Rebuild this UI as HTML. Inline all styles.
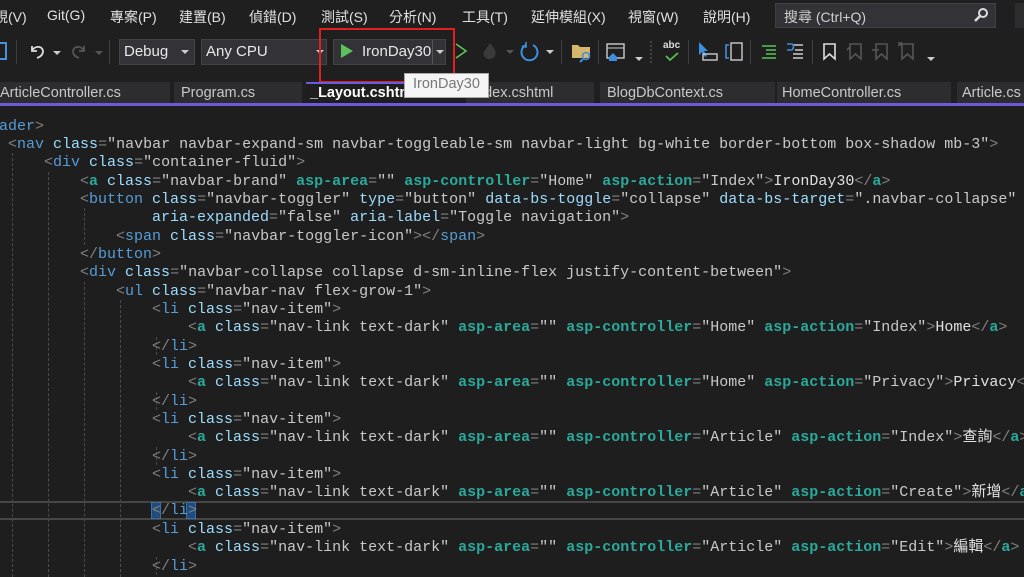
<!DOCTYPE html>
<html><head><meta charset="utf-8">
<style>
*{margin:0;padding:0;box-sizing:border-box}
html,body{width:1024px;height:577px;overflow:hidden}
body{background:#1e1e1e;position:relative;font-family:"Liberation Sans","Noto Sans CJK TC",sans-serif}
.abs{position:absolute}
#clip{position:absolute;left:0;top:0;width:1024px;height:577px;overflow:hidden}
#menu{left:0;top:0;width:1024px;height:32px;background:#1f1f1f}
.m{position:absolute;top:7px;color:#e0e0e0;font-size:14px;white-space:nowrap}
#search{left:775px;top:3px;width:221px;height:25px;background:#333337;border:1px solid #3f3f46;color:#d0d0d0;font-size:14px;padding:3px 8px}
#tb{left:0;top:32px;width:1024px;height:50px;background:#1f1f1f}
.dd{position:absolute;top:39px;height:26px;background:#333337;border:1px solid #434346;color:#e8e8e8;font-size:15px;padding:3px 4px}
.caret{position:absolute;width:0;height:0;border-left:4px solid transparent;border-right:4px solid transparent;border-top:4px solid #ccc}
.sep{position:absolute;top:40px;width:1px;height:24px;background:#3f3f46}
#tabs{left:0;top:82px;width:1024px;height:22px;background:#1f1f1f}
.tab{position:absolute;top:82px;height:22px;background:#2d2d30;color:#c8c8c8;font-size:14.5px;padding:3px 0 0 0;white-space:nowrap;overflow:hidden}
#purple{left:0;top:103px;width:1024px;height:3px;background:#6b5bd8}
.ln{position:absolute;font-family:"Liberation Mono","Noto Sans CJK TC",monospace;font-size:15px;line-height:18px;white-space:pre;color:#dcdcdc}
.d{color:#808080}.t{color:#569cd6}.a{color:#9cdcfe}.s{color:#c8c8c8}.p{color:#2aa99b;font-weight:bold}.x{color:#e0e0e0}
.g{position:absolute;width:0;border-left:1px dashed #4a4a4a}
</style></head><body><div id="clip">
<div id="menu" class="abs"></div>
<span class="m" style="left:-6px">視(V)</span>
<span class="m" style="left:47px">Git(G)</span>
<span class="m" style="left:110px">專案(P)</span>
<span class="m" style="left:179px">建置(B)</span>
<span class="m" style="left:249px">偵錯(D)</span>
<span class="m" style="left:321px">測試(S)</span>
<span class="m" style="left:389px">分析(N)</span>
<span class="m" style="left:462px">工具(T)</span>
<span class="m" style="left:531px">延伸模組(X)</span>
<span class="m" style="left:628px">視窗(W)</span>
<span class="m" style="left:703px">說明(H)</span>
<div id="search" class="abs">搜尋 (Ctrl+Q)</div>
<svg class="abs" style="left:973px;top:7px" width="16" height="16"><circle cx="10" cy="6" r="4" fill="none" stroke="#ddd" stroke-width="2"/><line x1="7" y1="9" x2="2" y2="14" stroke="#ddd" stroke-width="2.5"/></svg>
<div class="abs" style="left:1015px;top:3px;width:9px;height:25px;background:#2d2d30"></div>

<div id="tb" class="abs"></div>
<div class="abs" style="left:0;top:42px;width:7px;height:18px;border:2px solid #4a90d9;border-left:none"></div>
<div class="sep" style="left:16px"></div>
<svg class="abs" style="left:28px;top:42px" width="18" height="18"><path d="M4 4 L4 9 L9 9 M4 9 C6 4 14 3 15 9 C15 13 12 15 9 16" fill="none" stroke="#ddd" stroke-width="1.8"/></svg>
<div class="caret" style="left:53px;top:51px"></div>
<svg class="abs" style="left:70px;top:42px" width="18" height="18"><path d="M14 4 L14 9 L9 9 M14 9 C12 4 4 3 3 9 C3 13 6 15 9 16" fill="none" stroke="#555" stroke-width="1.8"/></svg>
<div class="caret" style="left:95px;top:51px;border-top-color:#555"></div>
<div class="sep" style="left:109px"></div>
<div class="dd" style="left:119px;width:76px">Debug</div>
<div class="caret" style="left:181px;top:50px"></div>
<div class="dd" style="left:201px;width:126px">Any CPU</div>
<div class="caret" style="left:316px;top:50px"></div>
<div class="dd" style="left:333px;width:113px;padding-left:28px">IronDay30</div>
<svg class="abs" style="left:340px;top:43px" width="14" height="16"><path d="M1 1 L13 8 L1 15 Z" fill="#5cc35c"/></svg>
<div class="abs" style="left:432px;top:40px;width:1px;height:24px;background:#555"></div>
<div class="caret" style="left:436px;top:50px"></div>
<div class="abs" style="left:319px;top:28px;width:136px;height:55px;border:2px solid #e02020"></div>
<svg class="abs" style="left:454px;top:42px" width="14" height="18"><path d="M2 2 L12 9 L2 16" fill="none" stroke="#5cc35c" stroke-width="1.6"/></svg>
<svg class="abs" style="left:480px;top:41px" width="20" height="20"><path d="M10 2 C14 7 17 10 15 15 C13 19 6 19 4 15 C2 11 6 9 10 2Z" fill="#3a3a3a"/></svg>
<div class="caret" style="left:506px;top:50px;border-top-color:#555"></div>
<svg class="abs" style="left:520px;top:42px" width="20" height="20"><path d="M6 3 A8 8 0 1 0 13 3" fill="none" stroke="#3c8fe0" stroke-width="2"/><path d="M6 0 L6 5 L2 4" fill="none" stroke="#3c8fe0" stroke-width="1.6"/></svg>
<div class="caret" style="left:546px;top:50px"></div>
<div class="sep" style="left:561px"></div>
<svg class="abs" style="left:571px;top:41px" width="22" height="22"><path d="M1 4 L7 4 L9 6 L19 6 L19 17 L1 17Z" fill="#d6b56d"/><circle cx="15" cy="15" r="3.5" fill="none" stroke="#3c8fe0" stroke-width="1.6"/><line x1="12" y1="18" x2="9" y2="21" stroke="#3c8fe0" stroke-width="2"/></svg>
<div class="sep" style="left:598px"></div>
<svg class="abs" style="left:606px;top:42px" width="22" height="22"><rect x="1" y="2" width="17" height="14" fill="none" stroke="#ccc" stroke-width="1.4"/><line x1="1" y1="6" x2="18" y2="6" stroke="#ccc"/><path d="M3 15 L7 11 L11 15 L11 19 L3 19Z" fill="#3c8fe0"/></svg>
<div class="caret" style="left:635px;top:57px"></div>
<div class="abs" style="left:650px;top:41px;width:3px;height:22px;border-left:2px dotted #444"></div>
<span class="abs" style="left:663px;top:40px;color:#ddd;font-size:10px;font-weight:bold">abc</span>
<svg class="abs" style="left:664px;top:52px" width="16" height="10"><path d="M2 4 L6 8 L14 1" fill="none" stroke="#5cc35c" stroke-width="1.6"/></svg>
<div class="sep" style="left:688px"></div>
<svg class="abs" style="left:697px;top:41px" width="22" height="22"><path d="M2 1 L2 14 L5 11 L8 16 L10 15 L7 10 L11 10Z" fill="#3c8fe0"/><rect x="6" y="13" width="14" height="6" fill="none" stroke="#ccc" stroke-width="1.4"/></svg>
<svg class="abs" style="left:724px;top:41px" width="20" height="22"><rect x="7" y="2" width="11" height="17" fill="none" stroke="#ccc" stroke-width="1.4"/><path d="M5 4 L2 4 L2 17 L5 17" fill="none" stroke="#3c8fe0" stroke-width="1.6"/></svg>
<div class="sep" style="left:750px"></div>
<svg class="abs" style="left:760px;top:43px" width="20" height="18"><path d="M2 3 H16 M6 7 H16 M6 11 H16 M2 15 H16" stroke="#5cc35c" stroke-width="1.5"/></svg>
<svg class="abs" style="left:785px;top:42px" width="22" height="20"><path d="M8 3 H18 M10 8 H18 M8 12 H18 M8 16 H18" stroke="#ccc" stroke-width="1.4"/><path d="M2 2 L7 2 C9 2 9 8 6 8 L2 8" fill="none" stroke="#3c8fe0" stroke-width="1.6"/></svg>
<div class="sep" style="left:812px"></div>
<svg class="abs" style="left:822px;top:42px" width="16" height="20"><path d="M2 2 H13 V17 L7.5 12 L2 17Z" fill="none" stroke="#ddd" stroke-width="1.6"/></svg>
<svg class="abs" style="left:846px;top:42px" width="18" height="20"><path d="M4 2 H15 V17 L9.5 12 L4 17Z M1 8 L4 5" fill="none" stroke="#555" stroke-width="1.6"/></svg>
<svg class="abs" style="left:872px;top:42px" width="18" height="20"><path d="M4 2 H15 V17 L9.5 12 L4 17Z M0 8 H7" fill="none" stroke="#555" stroke-width="1.6"/></svg>
<svg class="abs" style="left:898px;top:42px" width="18" height="20"><path d="M4 2 H15 V17 L9.5 12 L4 17Z M0 0 L4 4 M4 0 L0 4" fill="none" stroke="#555" stroke-width="1.6"/></svg>
<div class="caret" style="left:927px;top:57px"></div>

<div id="tabs" class="abs"></div>
<div class="tab" style="left:0;width:170px">ArticleController.cs</div>
<div class="tab" style="left:174px;width:128px;padding-left:7px">Program.cs</div>
<div class="tab" style="left:306px;width:160px;padding-left:4px;background:#1e1e1e;color:#fff;font-weight:bold;border-top:2px solid #6b5bd8;padding-top:1px">_Layout.cshtml</div>
<div class="tab" style="left:466px;width:128px;padding-left:6px">Index.cshtml</div>
<div class="tab" style="left:600px;width:175px;padding-left:7px">BlogDbContext.cs</div>
<div class="tab" style="left:777px;width:174px;padding-left:5px">HomeController.cs</div>
<div class="tab" style="left:957px;width:67px;padding-left:5px">Article.cs</div>
<div class="abs" style="left:404px;top:73px;width:85px;height:25px;background:#f5f5f5;border:1px solid #aaa;color:#777;font-size:14.5px;padding:2px 0 0 8px">IronDay30</div>
<div id="purple" class="abs"></div>

<div class="abs" style="left:0;top:501px;width:1024px;height:19px;border-top:2px solid #464646;border-bottom:2px solid #464646"></div>
<div class="abs" style="left:151px;top:502px;width:10px;height:17px;background:#1e4c80;border:1px solid #3a6ea5"></div>
<div class="abs" style="left:186px;top:502px;width:10px;height:17px;background:#1e4c80;border:1px solid #3a6ea5"></div>

<div class="g" style="left:12px;top:153px;height:424px"></div>
<div class="g" style="left:48px;top:172px;height:405px"></div>
<div class="g" style="left:84px;top:208px;height:37px"></div>
<div class="g" style="left:84px;top:282px;height:295px"></div>
<div class="g" style="left:120px;top:300px;height:277px"></div>
<div class="g" style="left:156px;top:337px;height:18px"></div>
<div class="g" style="left:156px;top:392px;height:18px"></div>
<div class="g" style="left:156px;top:447px;height:18px"></div>
<div class="g" style="left:156px;top:502px;height:18px"></div>
<div class="g" style="left:156px;top:557px;height:18px"></div>

<div class="ln" style="left:-1px;top:118px"><span class="t">ader</span><span class="d">&gt;</span></div>
<div class="ln" style="left:8px;top:136px"><span class="d">&lt;</span><span class="t">nav</span> <span class="a">class</span><span class="d">=</span><span class="s">"navbar navbar-expand-sm navbar-toggleable-sm navbar-light bg-white border-bottom box-shadow mb-3"</span><span class="d">&gt;</span></div>
<div class="ln" style="left:44px;top:154px"><span class="d">&lt;</span><span class="t">div</span> <span class="a">class</span><span class="d">=</span><span class="s">"container-fluid"</span><span class="d">&gt;</span></div>
<div class="ln" style="left:80px;top:173px"><span class="d">&lt;</span><span class="p">a</span> <span class="a">class</span><span class="d">=</span><span class="s">"navbar-brand"</span> <span class="p">asp-area</span><span class="d">=</span><span class="s">""</span> <span class="p">asp-controller</span><span class="d">=</span><span class="s">"Home"</span> <span class="p">asp-action</span><span class="d">=</span><span class="s">"Index"</span><span class="d">&gt;</span><span class="x">IronDay30</span><span class="d">&lt;/</span><span class="p">a</span><span class="d">&gt;</span></div>
<div class="ln" style="left:80px;top:191px"><span class="d">&lt;</span><span class="t">button</span> <span class="a">class</span><span class="d">=</span><span class="s">"navbar-toggler"</span> <span class="a">type</span><span class="d">=</span><span class="s">"button"</span> <span class="a">data-bs-toggle</span><span class="d">=</span><span class="s">"collapse"</span> <span class="a">data-bs-target</span><span class="d">=</span><span class="s">".navbar-collapse"</span> <span class="a">aria-controls</span></div>
<div class="ln" style="left:152px;top:209px"><span class="a">aria-expanded</span><span class="d">=</span><span class="s">"false"</span> <span class="a">aria-label</span><span class="d">=</span><span class="s">"Toggle navigation"</span><span class="d">&gt;</span></div>
<div class="ln" style="left:116px;top:228px"><span class="d">&lt;</span><span class="t">span</span> <span class="a">class</span><span class="d">=</span><span class="s">"navbar-toggler-icon"</span><span class="d">&gt;&lt;/</span><span class="t">span</span><span class="d">&gt;</span></div>
<div class="ln" style="left:80px;top:246px"><span class="d">&lt;/</span><span class="t">button</span><span class="d">&gt;</span></div>
<div class="ln" style="left:80px;top:264px"><span class="d">&lt;</span><span class="t">div</span> <span class="a">class</span><span class="d">=</span><span class="s">"navbar-collapse collapse d-sm-inline-flex justify-content-between"</span><span class="d">&gt;</span></div>
<div class="ln" style="left:116px;top:283px"><span class="d">&lt;</span><span class="t">ul</span> <span class="a">class</span><span class="d">=</span><span class="s">"navbar-nav flex-grow-1"</span><span class="d">&gt;</span></div>
<div class="ln" style="left:152px;top:301px"><span class="d">&lt;</span><span class="t">li</span> <span class="a">class</span><span class="d">=</span><span class="s">"nav-item"</span><span class="d">&gt;</span></div>
<div class="ln" style="left:188px;top:319px"><span class="d">&lt;</span><span class="p">a</span> <span class="a">class</span><span class="d">=</span><span class="s">"nav-link text-dark"</span> <span class="p">asp-area</span><span class="d">=</span><span class="s">""</span> <span class="p">asp-controller</span><span class="d">=</span><span class="s">"Home"</span> <span class="p">asp-action</span><span class="d">=</span><span class="s">"Index"</span><span class="d">&gt;</span><span class="x">Home</span><span class="d">&lt;/</span><span class="p">a</span><span class="d">&gt;</span></div>
<div class="ln" style="left:152px;top:338px"><span class="d">&lt;/</span><span class="t">li</span><span class="d">&gt;</span></div>
<div class="ln" style="left:152px;top:356px"><span class="d">&lt;</span><span class="t">li</span> <span class="a">class</span><span class="d">=</span><span class="s">"nav-item"</span><span class="d">&gt;</span></div>
<div class="ln" style="left:188px;top:374px"><span class="d">&lt;</span><span class="p">a</span> <span class="a">class</span><span class="d">=</span><span class="s">"nav-link text-dark"</span> <span class="p">asp-area</span><span class="d">=</span><span class="s">""</span> <span class="p">asp-controller</span><span class="d">=</span><span class="s">"Home"</span> <span class="p">asp-action</span><span class="d">=</span><span class="s">"Privacy"</span><span class="d">&gt;</span><span class="x">Privacy</span><span class="d">&lt;/</span><span class="p">a</span><span class="d">&gt;</span></div>
<div class="ln" style="left:152px;top:393px"><span class="d">&lt;/</span><span class="t">li</span><span class="d">&gt;</span></div>
<div class="ln" style="left:152px;top:411px"><span class="d">&lt;</span><span class="t">li</span> <span class="a">class</span><span class="d">=</span><span class="s">"nav-item"</span><span class="d">&gt;</span></div>
<div class="ln" style="left:188px;top:429px"><span class="d">&lt;</span><span class="p">a</span> <span class="a">class</span><span class="d">=</span><span class="s">"nav-link text-dark"</span> <span class="p">asp-area</span><span class="d">=</span><span class="s">""</span> <span class="p">asp-controller</span><span class="d">=</span><span class="s">"Article"</span> <span class="p">asp-action</span><span class="d">=</span><span class="s">"Index"</span><span class="d">&gt;</span><span class="x">查詢</span><span class="d">&lt;/</span><span class="p">a</span><span class="d">&gt;</span></div>
<div class="ln" style="left:152px;top:448px"><span class="d">&lt;/</span><span class="t">li</span><span class="d">&gt;</span></div>
<div class="ln" style="left:152px;top:466px"><span class="d">&lt;</span><span class="t">li</span> <span class="a">class</span><span class="d">=</span><span class="s">"nav-item"</span><span class="d">&gt;</span></div>
<div class="ln" style="left:188px;top:484px"><span class="d">&lt;</span><span class="p">a</span> <span class="a">class</span><span class="d">=</span><span class="s">"nav-link text-dark"</span> <span class="p">asp-area</span><span class="d">=</span><span class="s">""</span> <span class="p">asp-controller</span><span class="d">=</span><span class="s">"Article"</span> <span class="p">asp-action</span><span class="d">=</span><span class="s">"Create"</span><span class="d">&gt;</span><span class="x">新增</span><span class="d">&lt;/</span><span class="p">a</span><span class="d">&gt;</span></div>
<div class="ln" style="left:152px;top:502px"><span class="d">&lt;/</span><span class="t">li</span><span class="d">&gt;</span></div>
<div class="ln" style="left:152px;top:521px"><span class="d">&lt;</span><span class="t">li</span> <span class="a">class</span><span class="d">=</span><span class="s">"nav-item"</span><span class="d">&gt;</span></div>
<div class="ln" style="left:188px;top:539px"><span class="d">&lt;</span><span class="p">a</span> <span class="a">class</span><span class="d">=</span><span class="s">"nav-link text-dark"</span> <span class="p">asp-area</span><span class="d">=</span><span class="s">""</span> <span class="p">asp-controller</span><span class="d">=</span><span class="s">"Article"</span> <span class="p">asp-action</span><span class="d">=</span><span class="s">"Edit"</span><span class="d">&gt;</span><span class="x">編輯</span><span class="d">&lt;/</span><span class="p">a</span><span class="d">&gt;</span></div>
<div class="ln" style="left:152px;top:558px"><span class="d">&lt;/</span><span class="t">li</span><span class="d">&gt;</span></div>
</div></body></html>
